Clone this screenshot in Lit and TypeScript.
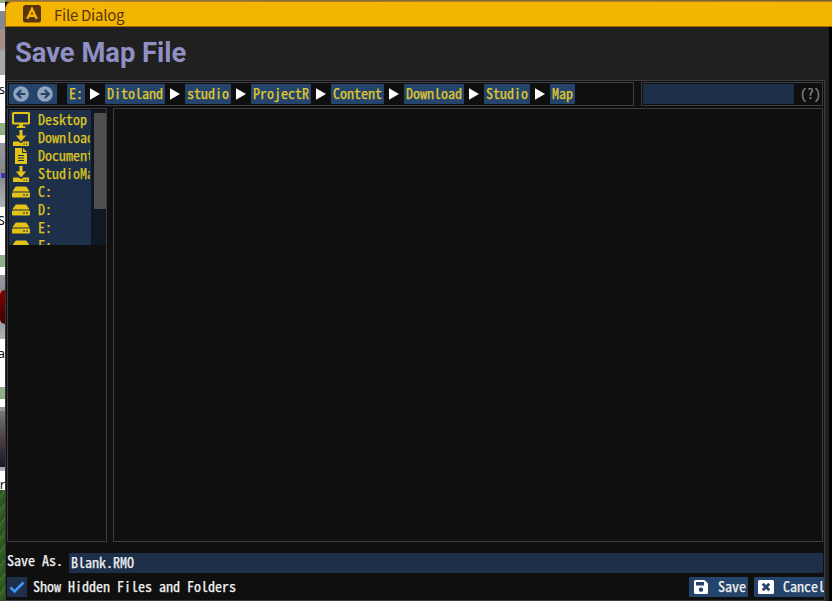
import { LitElement, html, svg, css } from "lit";
import { customElement } from "lit/decorators.js";

const icons = {
  desktop: svg`<path fill-rule="evenodd" d="M0 1.500Q0 0 1.500 0H16.500Q18 0 18 1.500V11Q18 12.500 16.500 12.500H11V14.200H13.300V16H4.700V14.200H7V12.500H1.500Q0 12.500 0 11ZM2 2V10.500H16V2Z"/>`,
  download: svg`<path fill-rule="evenodd" d="M7.500 0H10.500V5.500H14.200L9 11.400L3.800 5.500H7.500ZM1 11.500H6.700L9 13.200L11.300 11.500H17V16H1ZM11.500 13.500V14.700H12.700V13.500ZM14 13.500V14.700H15.200V13.500Z"/>`,
  document: svg`<path fill-rule="evenodd" d="M3 0H10V5H15V16H3ZM11 0L15 4H11ZM6 7V8.100H12V7ZM6 9.500V10.600H12V9.500ZM6 12V13.100H12V12Z"/>`,
  drive: svg`<path fill-rule="evenodd" d="M4.500 2.500H13.500Q14.300 2.500 15 3.500L17.600 7.500H.4L3 3.500Q3.700 2.500 4.500 2.500ZM1 8.500H17Q18 8.500 18 9.500V12.500Q18 13.500 17 13.500H1Q0 13.500 0 12.500V9.500Q0 8.500 1 8.500ZM11.300 10.300V11.700H12.700V10.300ZM14.300 10.300V11.700H15.700V10.300Z"/>`,
};

const places: { icon: keyof typeof icons; label: string }[] = [
  { icon: "desktop", label: "Desktop" },
  { icon: "download", label: "Downloads" },
  { icon: "document", label: "Documents" },
  { icon: "download", label: "StudioMap" },
  { icon: "drive", label: "C:" },
  { icon: "drive", label: "D:" },
  { icon: "drive", label: "E:" },
  { icon: "drive", label: "F:" },
];

const crumbs = ["E:", "Ditoland", "studio", "ProjectR", "Content", "Download", "Studio", "Map"];

@customElement("app-root")
export class AppRoot extends LitElement {
  static styles = css`
    :host {
      display: flex;
      width: 832px;
      height: 601px;
      overflow: hidden;
      background: #000;
      color: #f2f2f2;
      font: 500 14px/18px "Noto Sans Mono CJK JP", "Noto Sans Mono CJK SC", "Noto Sans CJK JP", monospace;
    }
    * { box-sizing: border-box; }
    svg { display: block; flex: none; }
    .world { width: 5px; flex: none; display: flex; flex-direction: column; background: #fff; color: #111; font: 13px/20px "Noto Sans", sans-serif; }
    .w { flex: none; overflow: hidden; display: flex; justify-content: flex-end; }
    .grass { background: #91ae86; }
    .shot { background: linear-gradient(#9699a0, #858589 45%, #b0b2b5); align-items: center; }
    .shot.first { background: linear-gradient(#858890 0 18px, #a49085 19px 38px, #a6a8ac 40px); }
    .red { width: 5px; height: 34px; border-radius: 5px 0 0 5px; background: linear-gradient(#850000, #3b0000); }
    .hair { width: 5px; height: 56px; background: linear-gradient(#77747a, #41363a 60%, #17182c); }
    .blue { width: 4px; height: 5px; background: #3636b6; }
    .lawn { flex: 1; background: repeating-linear-gradient(125deg, #2d5420 0 3px, #3c6a2a 3px 5px, #315c20 5px 8px); }
    .window { flex: 1; min-width: 0; display: flex; flex-direction: column; background: linear-gradient(90deg, #8c7840, #75642d) 0 0 / 100% 2px no-repeat, #000; }
    .title { height: 26px; margin-top: 1px; flex: none; display: flex; align-items: center; padding: 0 0 0 17px; gap: 13px; background: #f3b600; border: 1px solid #b47a29; border-right: 0; border-bottom-color: #a56800; border-radius: 8px 0 0 0; color: #593411; font: 400 15px/24px "Noto Sans CJK JP", sans-serif; letter-spacing: -0.26px; }
    .title span { padding-top: 2px; }
    .frame { flex: 1; min-height: 0; width: 824px; background: #202020; border-left: 1px solid #353538; display: flex; flex-direction: column; }
    .heading { height: 53px; flex: none; padding: 9px 0 0 9px; font: 700 27.300px/34px Roboto, sans-serif; color: #9090c4; }
    .body { flex: 1; width: 819px; border: 1px solid #3c3c43; border-left: 0; background: #0f0f0f; display: flex; flex-direction: column; padding: 1px 1px 0; -webkit-text-stroke: 0.25px currentColor; }
    .bar { height: 24px; flex: none; display: flex; gap: 6px; }
    .box { border: 1px solid #3c3c43; }
    .path { width: 629px; display: flex; padding: 1px; }
    .nav { display: flex; width: 48px; height: 20px; background: #24446b; border-radius: 1px; margin-right: 10px; align-items: center; justify-content: space-around; }
    .crumb { height: 20px; padding: 0 2px; background: #24446b; color: #e0c82c; border-radius: 1px; }
    .sep { width: 20px; height: 20px; }
    .path { width: 629px; }
    .find { flex: 1; display: flex; margin-left: 1px; padding: 1px; color: #858585; gap: 6px; }
    .query { width: 151px; height: 20px; background: #1e2f49; border-radius: 1px; }
    .panes { height: 434px; margin-top: 2px; flex: none; display: flex; gap: 6px; }
    .side { width: 100px; display: flex; align-items: flex-start; padding: 1px 0 0 1px; }
    .files { flex: 1; }
    .list { width: 82px; height: 135px; overflow: hidden; background: #1e2f49; padding-top: 1px; }
    .place { height: 18px; display: flex; align-items: center; padding-left: 3px; gap: 8px; color: #dfc51c; white-space: nowrap; overflow: hidden; width: 81px; }
    .place svg { fill: #e3c316; }
    .place span { padding-bottom: 2px; }
    .track { width: 15px; height: 135px; background: #101824; padding: 3px 0 0 3px; }
    .thumb { height: 96px; background: #4f4f4f; border-radius: 1px; }
    .name { height: 20px; margin-top: 11px; flex: none; display: flex; }
    .name label { width: 62px; line-height: 15px; }
    .value { flex: 1; height: 20px; padding: 0 2px; background: #1e2f49; border-radius: 1px; }
    .foot { height: 20px; margin-top: 4px; flex: none; display: flex; line-height: 18px; white-space: nowrap; }
    .check { width: 20px; height: 20px; background: #1e2f49; margin-right: 6px; }
    .fill { flex: 1; }
    .btn { height: 20px; background: #24446b; border-radius: 1px; display: flex; padding-left: 5px; gap: 10px; overflow: hidden; }
    .save { width: 59px; margin-right: 6px; }
    .cancel { width: 70px; padding-left: 4px; gap: 9px; margin-right: -1px; }
  `;

  render() {
    return html`
      <div class="world">
        <div class="w grass" style="height:3px"></div>
        <div class="w" style="height:8px"></div>
        <div class="w shot first" style="height:64px"></div>
        <div class="w" style="height:48px;padding-top:4px">s</div>
        <div class="w grass" style="height:12px"></div>
        <div class="w" style="height:8px"></div>
        <div class="w shot" style="height:64px"><div class="blue"></div></div>
        <div class="w" style="height:48px;padding-top:3px">fS</div>
        <div class="w grass" style="height:12px"></div>
        <div class="w" style="height:8px"></div>
        <div class="w shot" style="height:64px"><div class="red"></div></div>
        <div class="w" style="height:48px;padding-top:4px">a</div>
        <div class="w grass" style="height:12px"></div>
        <div class="w" style="height:8px"></div>
        <div class="w shot" style="height:64px"><div class="hair"></div></div>
        <div class="w" style="height:19px;padding-top:3px">r</div>
        <div class="lawn"></div>
      </div>
      <div class="window">
        <div class="title">
          <svg width="18" height="18" viewBox="0 0 18 18"><rect width="18" height="17.500" rx="2.500" fill="#593411"/><path d="M4.300 13.800L9 4L13.700 13.800M6 10.800H12" fill="none" stroke="#f3b600" stroke-width="2.400"/></svg>
          <span>File Dialog</span>
        </div>
        <div class="frame">
          <div class="heading">Save Map File</div>
          <div class="body">
            <div class="bar">
              <div class="box path">
                <div class="nav">
                  ${[0, 180].map((turn) => svg`<svg width="16" height="16" viewBox="0 0 16 16"><g transform="rotate(${turn} 8 8)"><circle cx="8" cy="8" r="7.800" fill="#91a4bd"/><path d="M12.300 8H4.500M8.200 4L4.200 8L8.200 12" fill="none" stroke="#24446b" stroke-width="2.200"/></g></svg>`)}
                </div>
                ${crumbs.map((c, i) => html`
                  ${i ? html`<svg class="sep" viewBox="0 0 20 20"><path d="M5 4.200L15 10L5 15.800Z" fill="#fff"/></svg>` : ""}<span class="crumb">${c}</span>`)}
              </div>
              <div class="box find"><div class="query"></div><span>(?)</span></div>
            </div>
            <div class="panes">
              <div class="box side">
                <div class="list">
                  ${places.map((p) => html`<div class="place"><svg width="18" height="16" viewBox="0 0 18 16">${icons[p.icon]}</svg><span>${p.label}</span></div>`)}
                </div>
                <div class="track"><div class="thumb"></div></div>
              </div>
              <div class="box files"></div>
            </div>
            <div class="name"><label>Save As.</label><div class="value">Blank.RMO</div></div>
            <div class="foot">
              <div class="check"><svg width="20" height="20" viewBox="0 0 20 20"><path d="M3.500 10.500L7.500 14.500L16.500 5.500" fill="none" stroke="#4296fa" stroke-width="2.500"/></svg></div>
              <span>Show Hidden Files and Folders</span>
              <span class="fill"></span>
              <div class="btn save"><svg width="14" height="20" viewBox="0 0 14 20"><path fill="#fff" fill-rule="evenodd" d="M1.500 3H10.500L14 6.500V15.500Q14 17 12.500 17H1.500Q0 17 0 15.500V4.500Q0 3 1.500 3ZM2 5V8.500H10V5ZM7 10.500A2.200 2.200 0 1 0 7.010 10.500Z"/></svg><span>Save</span></div>
              <div class="btn cancel"><svg width="16" height="20" viewBox="0 0 16 20"><rect y="3" width="16" height="14" rx="1.500" fill="#fff"/><path d="M4.700 6.700L11.300 13.300M11.300 6.700L4.700 13.300" stroke="#24446b" stroke-width="2.800"/></svg><span>Cancel</span></div>
            </div>
          </div>
        </div>
      </div>`;
  }
}
